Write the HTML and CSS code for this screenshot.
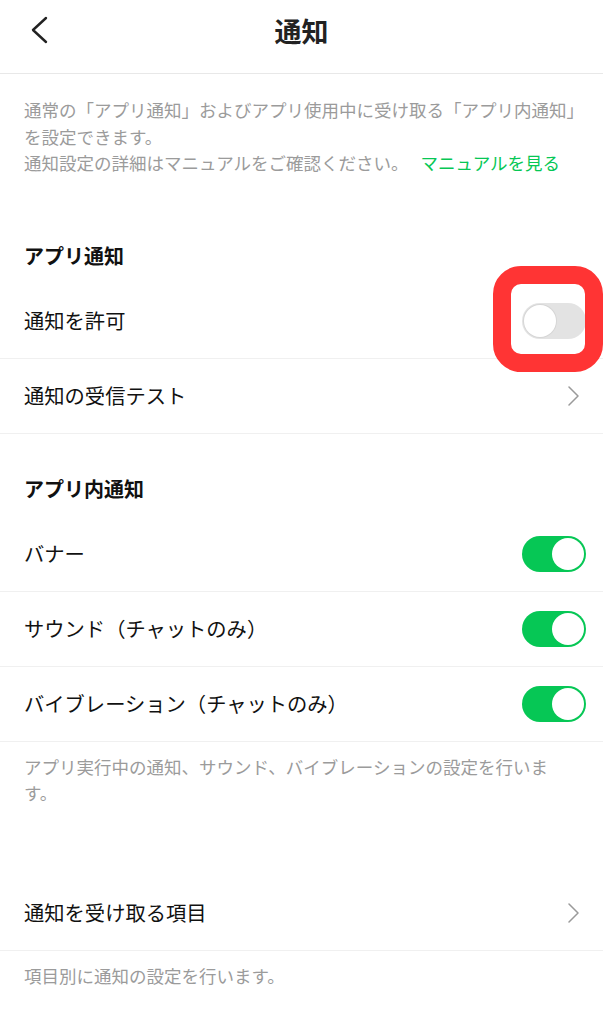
FILE: index.html
```html
<!DOCTYPE html>
<html lang="ja">
<head>
<meta charset="utf-8">
<title>通知</title>
<link rel="stylesheet" href="styles.css">
</head>
<body>
<div class="screen">
  <header class="header">
    <svg class="back" width="20" height="30" viewBox="0 0 20 30" aria-hidden="true">
      <polyline points="16,2 3,14 16,26" fill="none" stroke="#222" stroke-width="2.4" stroke-linecap="round" stroke-linejoin="round"/>
    </svg>
    <h1 class="title">通知</h1>
  </header>

  <p class="intro">通常の「アプリ通知」およびアプリ使用中に受け取る「アプリ内通知」を設定できます。<br>通知設定の詳細はマニュアルをご確認ください。<a class="link">マニュアルを見る</a></p>

  <h2 class="section-title">アプリ通知</h2>
  <div class="row">
    <span class="label">通知を許可</span>
    <span class="toggle"><span class="knob"></span></span>
    <span class="highlight"></span>
  </div>
  <div class="row">
    <span class="label">通知の受信テスト</span>
    <svg class="chev" width="12" height="20" viewBox="0 0 12 20" aria-hidden="true">
      <polyline points="2,1 11,10 2,19" fill="none" stroke="#9a9a9a" stroke-width="1.5" stroke-linecap="round" stroke-linejoin="round"/>
    </svg>
  </div>

  <h2 class="section-title">アプリ内通知</h2>
  <div class="row">
    <span class="label">バナー</span>
    <span class="toggle on"><span class="knob"></span></span>
  </div>
  <div class="row">
    <span class="label">サウンド（チャットのみ）</span>
    <span class="toggle on"><span class="knob"></span></span>
  </div>
  <div class="row">
    <span class="label">バイブレーション（チャットのみ）</span>
    <span class="toggle on"><span class="knob"></span></span>
  </div>
  <p class="note note-wide">アプリ実行中の通知、サウンド、バイブレーションの設定を行います。</p>

  <div class="row">
    <span class="label">通知を受け取る項目</span>
    <svg class="chev" width="12" height="20" viewBox="0 0 12 20" aria-hidden="true">
      <polyline points="2,1 11,10 2,19" fill="none" stroke="#9a9a9a" stroke-width="1.5" stroke-linecap="round" stroke-linejoin="round"/>
    </svg>
  </div>
  <p class="note">項目別に通知の設定を行います。</p>
</div>
</body>
</html>
```

FILE: styles.css
```css
* { box-sizing: border-box; }

html, body {
  margin: 0;
  padding: 0;
  background: #ffffff;
}

body {
  font-family: "Noto Sans CJK JP", "Noto Sans", sans-serif;
  color: #111111;
}

.screen {
  width: 603px;
  min-height: 1024px;
  overflow: hidden;
}

.header {
  height: 74px;
  border-bottom: 1px solid #e8e8e8;
  display: flex;
  justify-content: center;
  align-items: flex-start;
  padding-top: 14px;
  position: relative;
}

.back {
  position: absolute;
  left: 30px;
  top: 16px;
}

.title {
  margin: 0;
  font-size: 27px;
  line-height: 34px;
  font-weight: 700;
  color: #222;
}

.intro {
  margin: 0;
  padding: 23px 10px 24px 24px;
  font-size: 17.5px;
  line-height: 26.5px;
  color: #9b9b9b;
}

.link {
  color: #06c755;
  margin-left: 12px;
}

.section-title {
  margin: 0;
  padding: 43px 24px 16px;
  font-size: 20px;
  line-height: 24px;
  font-weight: 700;
  color: #111;
}

.row {
  position: relative;
  height: 75px;
  border-bottom: 1px solid #f0f0f0;
  display: flex;
  align-items: center;
  justify-content: space-between;
  padding: 0 17px 0 24px;
}

.label {
  font-size: 20.3px;
  line-height: 28px;
  color: #111;
  margin-top: -2px;
}

.chev {
  margin-right: 7px;
}

.toggle {
  width: 64px;
  height: 36px;
  border-radius: 18px;
  background: #e3e3e3;
  position: relative;
  flex: none;
}

.knob {
  position: absolute;
  top: 2px;
  left: 2px;
  width: 32px;
  height: 32px;
  border-radius: 50%;
  background: #ffffff;
  box-shadow: 0 0 0 1px #d6d6d6;
}

.toggle.on {
  background: #06c755;
}

.toggle.on .knob {
  left: 30px;
  box-shadow: none;
}

.highlight {
  position: absolute;
  right: 0;
  top: -18px;
  width: 110px;
  height: 106px;
  border: 18px solid #ff3434;
  border-radius: 28px;
  pointer-events: none;
}

.note {
  margin: 0;
  padding: 12px 24px 0 24px;
  font-size: 17.5px;
  line-height: 26px;
  color: #9b9b9b;
}

.note-wide {
  padding-right: 40px;
  margin-bottom: 70px;
}
```
